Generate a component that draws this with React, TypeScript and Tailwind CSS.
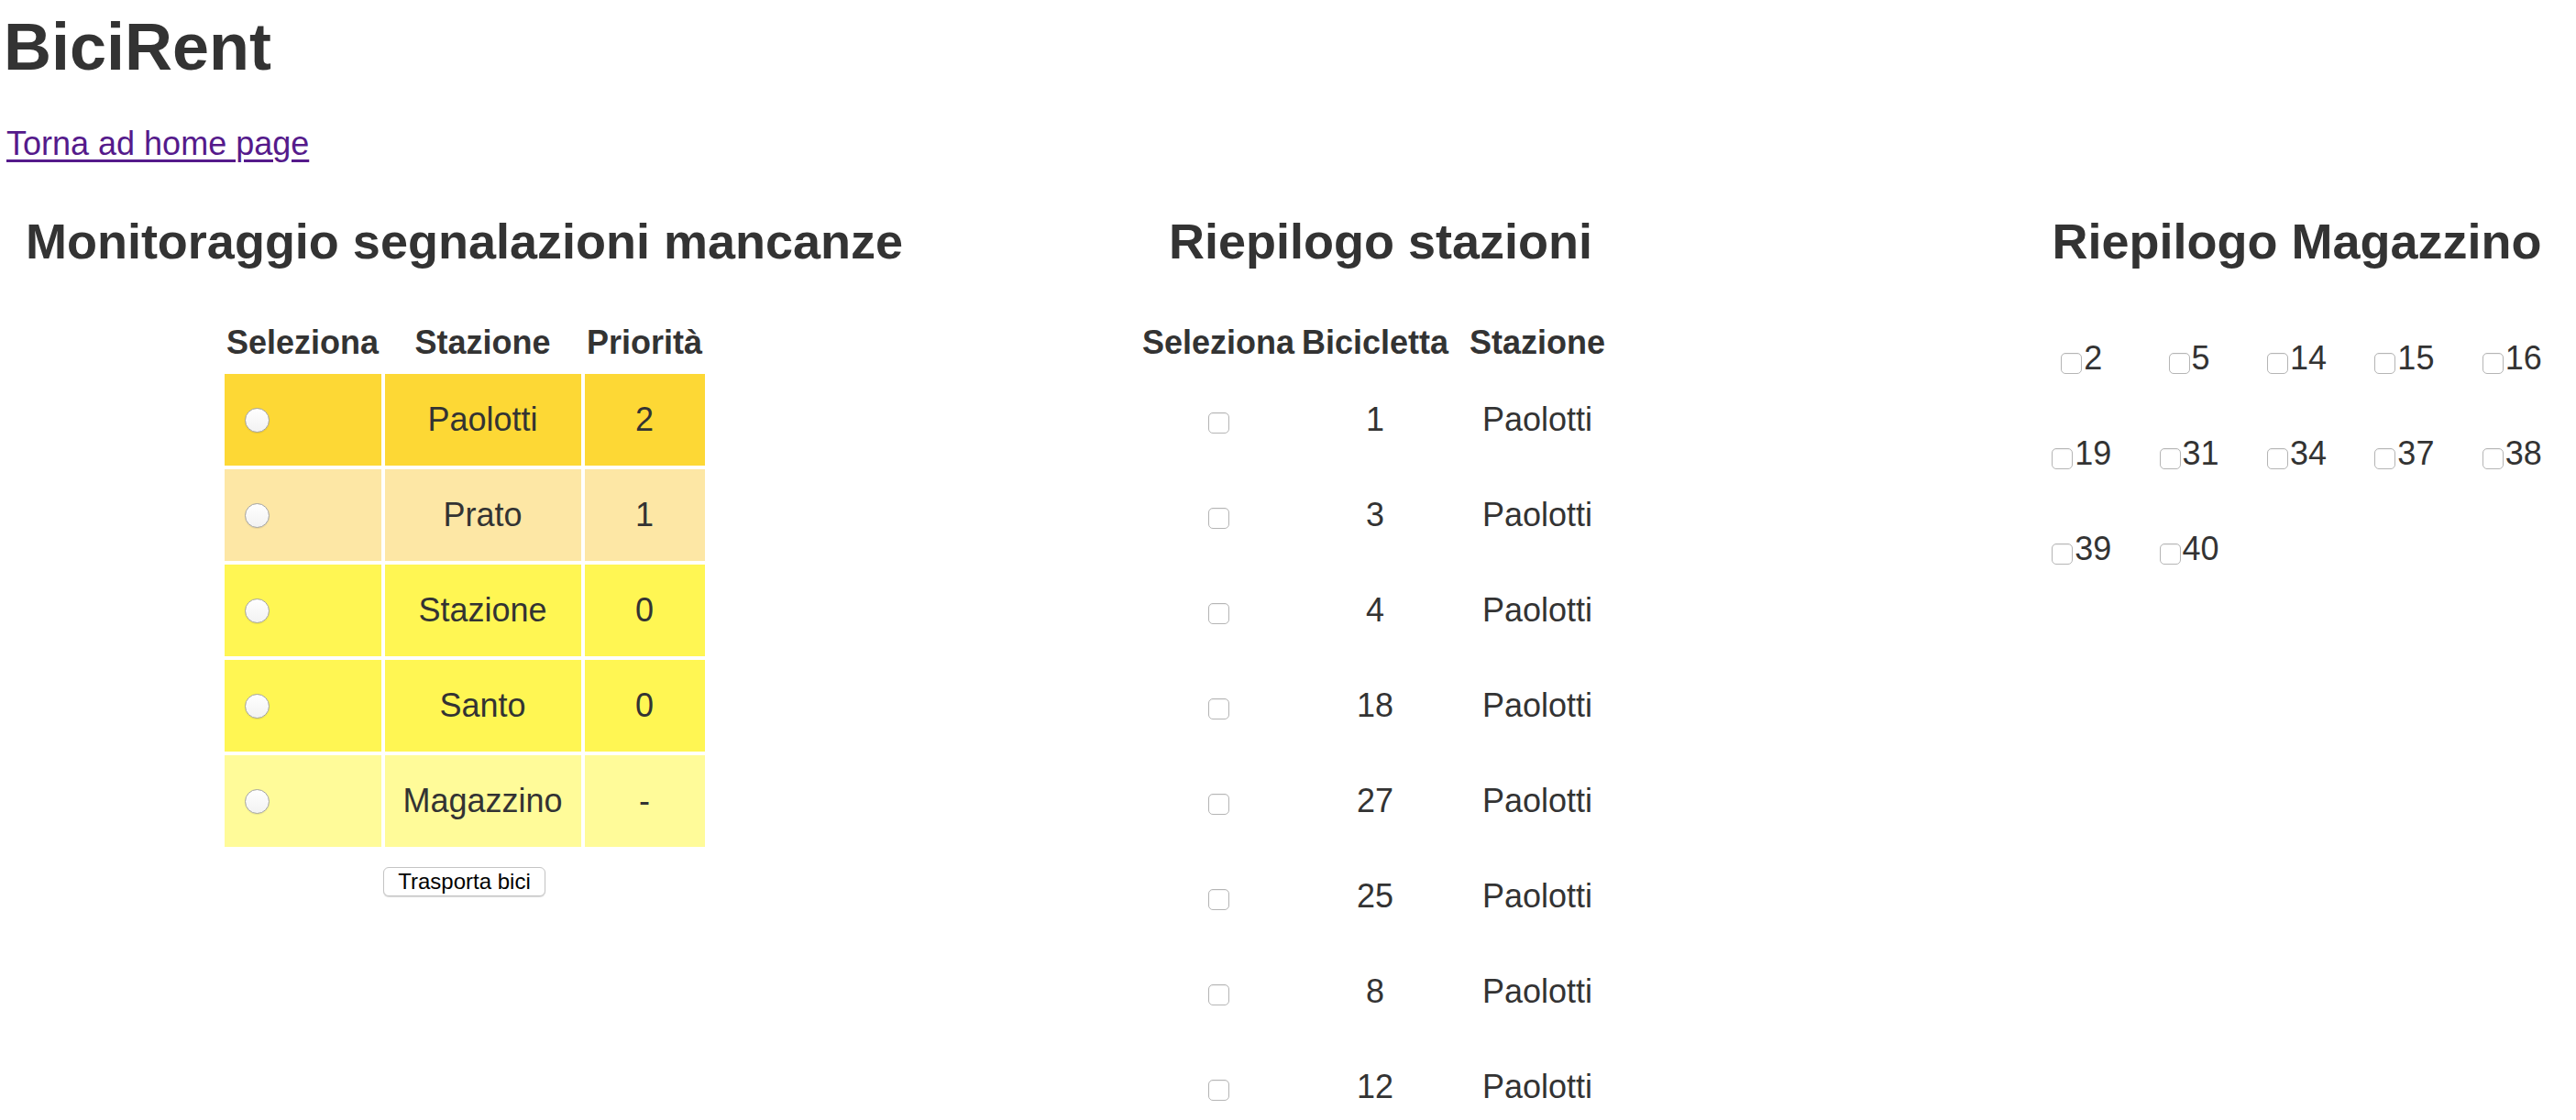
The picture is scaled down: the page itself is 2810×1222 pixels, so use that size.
import { useState } from 'react';

interface Segnalazione {
  stazione: string;
  priorita: string;
  color: string;
}

const segnalazioni: Segnalazione[] = [
  { stazione: 'Paolotti', priorita: '2', color: 'bg-[#fdd835]' },
  { stazione: 'Prato', priorita: '1', color: 'bg-[#fde7a5]' },
  { stazione: 'Stazione', priorita: '0', color: 'bg-[#fff653]' },
  { stazione: 'Santo', priorita: '0', color: 'bg-[#fff653]' },
  { stazione: 'Magazzino', priorita: '-', color: 'bg-[#fffb99]' },
];

const biciStazioni = [1, 3, 4, 18, 27, 25, 8, 12].map((n) => ({ bici: n, stazione: 'Paolotti' }));

const magazzino = [2, 5, 14, 15, 16, 19, 31, 34, 37, 38, 39, 40];

const checkboxCls =
  'appearance-none rounded-[5px] border border-[#b5b5b5] bg-white shadow-[inset_0_1px_1px_rgba(0,0,0,0.06)]';

export default function App() {
  const [selected, setSelected] = useState<string | null>(null);

  return (
    <div className="w-[2810px] min-h-[1222px] overflow-hidden bg-white text-[#333] font-['Liberation_Sans',Arial,sans-serif]">
      <h1 className="pt-[15px] pl-[4px] text-[72px] font-bold leading-none">BiciRent</h1>

      <div className="mt-[52px] pl-[7px] text-[36px] leading-none">
        <a href="#" className="text-[#551a8b] underline underline-offset-[5px] decoration-[3px]">
          Torna ad home page
        </a>
      </div>

      <div className="mt-[61px] flex">
        {/* Monitoraggio */}
        <section className="w-[1013px] shrink-0 flex flex-col items-center">
          <h2 className="text-[54px] font-bold leading-none">Monitoraggio segnalazioni mancanze</h2>

          <div className="mt-[66px] grid grid-cols-[171px_214px_131px] gap-x-[4px] text-[36px] font-bold leading-none text-center">
            <div>Seleziona</div>
            <div>Stazione</div>
            <div>Priorità</div>
          </div>
          <div className="mt-[16px] grid grid-cols-[171px_214px_131px] gap-[4px] text-[36px] leading-none">
            {segnalazioni.map((s) => (
              <div key={s.stazione} className="contents">
                <div className={`h-[100px] flex items-center pl-[22px] ${s.color}`}>
                  <input
                    type="radio"
                    name="stazione"
                    checked={selected === s.stazione}
                    onChange={() => setSelected(s.stazione)}
                    className="appearance-none w-[27px] h-[27px] rounded-full border border-[#a3a3a3] bg-linear-to-b from-white to-[#f2f2f2] shadow-[0_1px_1px_rgba(0,0,0,0.08)]"
                  />
                </div>
                <div className={`h-[100px] flex items-center justify-center ${s.color}`}>{s.stazione}</div>
                <div className={`h-[100px] flex items-center justify-center ${s.color}`}>{s.priorita}</div>
              </div>
            ))}
          </div>

          <button
            type="button"
            className="mt-[22px] h-[32px] px-[15px] rounded-[6px] border border-[#c4c4c4] bg-white text-[24px] leading-none text-black shadow-[0_1px_1px_rgba(0,0,0,0.15)]"
          >
            Trasporta bici
          </button>
        </section>

        {/* Riepilogo stazioni */}
        <section className="w-[986px] shrink-0 flex flex-col items-center">
          <h2 className="text-[54px] font-bold leading-none">Riepilogo stazioni</h2>

          <div className="mt-[66px] grid grid-cols-[169px_165px_181px] gap-x-[4px] text-[36px] font-bold leading-none text-center">
            <div>Seleziona</div>
            <div>Bicicletta</div>
            <div>Stazione</div>
          </div>
          <div className="mt-[16px] grid grid-cols-[169px_165px_181px] gap-[4px] text-[36px] leading-none">
            {biciStazioni.map((b) => (
              <div key={b.bici} className="contents">
                <div className="h-[100px] flex items-center justify-center">
                  <input type="checkbox" className={`mt-[6px] w-[23px] h-[23px] ${checkboxCls}`} />
                </div>
                <div className="h-[100px] flex items-center justify-center">{b.bici}</div>
                <div className="h-[100px] flex items-center justify-center">{b.stazione}</div>
              </div>
            ))}
          </div>
        </section>

        {/* Riepilogo Magazzino */}
        <section className="w-[1013px] shrink-0 flex flex-col items-center">
          <h2 className="text-[54px] font-bold leading-none">Riepilogo Magazzino</h2>

          <div className="mt-[51px] grid grid-cols-5 w-[587px] gap-y-[4px] text-[36px] leading-none">
            {magazzino.map((n) => (
              <label key={n} className="h-[100px] flex items-center justify-center">
                <input type="checkbox" className={`mt-[10px] mr-[2px] w-[23px] h-[23px] ${checkboxCls}`} />
                {n}
              </label>
            ))}
          </div>
        </section>
      </div>
    </div>
  );
}
